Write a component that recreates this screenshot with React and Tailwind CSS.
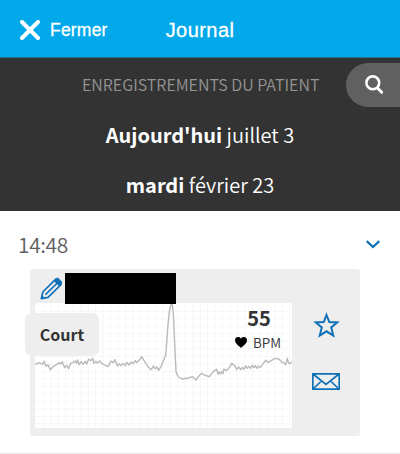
const SANS = "font-['Noto_Sans_CJK_SC',sans-serif]";

const TRACE =
  "0,185 12,179 23,184 27,175 33,190 39,185 46,200 53,192 65,184 73,179 77,183 82,176 89,194 95,187 101,197 107,181 115,178 121,174 124,181 128,171 132,185 139,176 144,184 151,175 155,183 161,169 168,173 173,166 177,181 183,175 187,180 194,174 200,181 207,185 219,191 228,174 235,179 240,170 247,189 253,182 258,188 264,181 271,188 276,178 282,186 289,177 294,182 301,173 305,179 313,171 320,161 327,173 337,188 347,200 351,197 355,189 361,197 366,192 371,202 378,191 385,173 392,157 395,120 399,65 403,26 407,8 409,5 412,5 415,31 419,121 423,206 426,214 431,222 441,228 460,225 473,221 483,231 490,221 500,211 508,216 523,221 535,205 545,199 549,213 553,207 556,213 560,206 564,212 567,198 575,203 585,191 590,181 600,189 605,199 611,192 617,200 622,193 627,199 632,188 637,196 642,190 647,196 652,187 657,194 661,188 666,196 670,189 676,193 692,172 700,178 720,166 732,168 740,177 746,179 752,185 757,166 761,181 765,182 771,176";

const GRID_X = Array.from({ length: 34 }, (_, i) => 25 + i * 22.4);
const GRID_Y = Array.from({ length: 16 }, (_, i) => 25 + i * 22.5);

function EcgChart() {
  return (
    <svg className="block h-[125px] w-[257px]" viewBox="0 0 771 375" fill="none">
      <g stroke="#f7f7f7" strokeWidth="3">
        {GRID_X.map((x) => (
          <path key={x} d={`M${x} 0V375`} />
        ))}
        {GRID_Y.map((y) => (
          <path key={y} d={`M0 ${y}H771`} />
        ))}
      </g>
      <polyline points={TRACE} stroke="#b9b9b9" strokeWidth="4.2" strokeLinejoin="round" />
    </svg>
  );
}

function Pencil() {
  return (
    <svg className="block h-[23px] w-[23px]" viewBox="0 0 23 23" fill="none" stroke="#0f70b7" strokeWidth="1.7" strokeLinejoin="round">
      <path d="M1.3 21.6 2.8 15 15.8 2.1 21.2 7.5 8 20.4Z" />
      <path d="M5.4 17.6 17 6.2" strokeWidth="1.6" />
      <path d="M13.8 4 17 .8Q17.6.3 18.3.9L22 4.8Q22.5 5.5 21.9 6.2L19 9.2Z" fill="#0f70b7" stroke="none" />
      <path d="M1 22 2 18 5 21.2Z" fill="#0f70b7" stroke="none" />
    </svg>
  );
}

export default function App() {
  return (
    <div className={`h-[454px] w-[400px] overflow-hidden bg-white ${SANS}`}>
      <header className="grid h-[57px] grid-cols-[141px_118px_141px] items-center bg-[#02a9ea] pt-[3px] font-['Liberation_Sans',Arial,sans-serif] text-white">
        <div className="flex items-center pl-5">
          <svg className="h-5 w-5" viewBox="0 0 20 20" stroke="#fff" strokeWidth="4" strokeLinecap="round">
            <path d="M2 2 18 18M18 2 2 18" />
          </svg>
          <span className="ml-[10px] text-[17.5px] leading-5 tracking-[0.2px] [-webkit-text-stroke:0.3px_white]">Fermer</span>
        </div>
        <h1 className="text-center text-[20px] leading-6 tracking-[0.45px] [-webkit-text-stroke:0.3px_white]">
          Journal
        </h1>
      </header>

      <section className="h-[154px] border-t border-[#277093] bg-[#333] text-white">
        <div className="flex h-[52px] items-center pt-[1px]">
          <h2 className="w-[263px] shrink-0 pb-[2px] pl-[82px] text-[16px] leading-6 font-[350] whitespace-nowrap text-[#959595]">
            ENREGISTREMENTS DU PATIENT
          </h2>
          <button className="ml-auto flex h-[44px] w-[54px] shrink-0 items-center rounded-l-[22px] bg-[#606060] pl-[19px]">
            <svg className="h-[19px] w-[18px]" viewBox="0 0 18 19" fill="none" stroke="#fff">
              <circle cx="7.8" cy="7.8" r="6.4" strokeWidth="2.6" />
              <path d="M12.5 13 16.7 17.3" strokeWidth="3" strokeLinecap="round" />
            </svg>
          </button>
        </div>
        <p className="h-[50px] text-center text-[20px] leading-[50px] font-[350]">
          <b className="font-bold">Aujourd'hui</b> juillet 3
        </p>
        <p className="h-[50px] text-center text-[20px] leading-[50px] font-[350]">
          <b className="font-bold">mardi</b> février 23
        </p>
      </section>

      <main className="h-[243px] border-b border-[#e8e8e8]">
        <div className="flex h-[58px] items-center justify-between pt-[8px] pr-[20px] pl-[18px]">
          <time className="text-[21px] leading-8 font-[350] tracking-[-0.4px] text-[#606060]">14:48</time>
          <svg className="h-[9px] w-[14px]" viewBox="0 0 14 9" fill="none" stroke="#0f70b7" strokeWidth="2.3">
            <path d="M.7 1.2 7 7 13.3 1.2" />
          </svg>
        </div>

        <article className="ml-[30px] flex h-[167px] w-[330px] rounded-[3px] bg-[#eee] pl-[5px]">
          <div className="w-[257px]">
            <div className="flex h-[34px] items-end">
              <div className="mb-[3px] ml-[5px]">
                <Pencil />
              </div>
              <div className="relative top-[1px] z-10 ml-[2px] h-[31px] w-[111px] bg-black" />
            </div>
            <div className="relative h-[125px] w-[257px] rounded-tl-[4px] bg-white">
              <EcgChart />
              <span className="absolute top-[10px] -left-[10px] flex h-[43px] w-[74px] items-center justify-center rounded-[7px] bg-[#eee] pb-[1px] text-[16px] font-bold text-[#333]">
                Court
              </span>
              <strong className="absolute top-[3px] right-[8px] w-[50px] text-center text-[20px] leading-6 text-[#333]">
                55
              </strong>
              <div className="absolute top-[29px] right-[11px] flex items-center text-[#333]">
                <svg className="mr-[6px] h-[11px] w-[12px]" viewBox="0 0 12 11" fill="#000">
                  <path d="M6 11C4.5 9.2 0 6.8 0 3.2 0 1.2 1.4 0 3.1 0 4.5 0 5.5.7 6 1.7 6.5.7 7.5 0 8.9 0 10.6 0 12 1.2 12 3.2 12 6.8 7.5 9.2 6 11Z" />
                </svg>
                <span className="text-[13.5px] leading-5 font-[350]">BPM</span>
              </div>
            </div>
          </div>
          <div className="flex w-[68px] flex-col items-center pt-[43px]">
            <svg className="h-[26px] w-[27px]" viewBox="0 0 27 26" fill="none" stroke="#0f70b7" strokeWidth="2">
              <path d="M13.5 3 16.3 10 24.2 10.4 18.2 15.4 20.3 23.6 13.5 19.3 6.7 23.6 8.8 15.4 2.8 10.4 10.7 10Z" />
            </svg>
            <svg className="mt-[35px] h-[17px] w-[28px]" viewBox="0 0 28 17" fill="none" stroke="#0f70b7" strokeWidth="1.7">
              <path d="M.8.9H27.2V16.1H.8ZM1 1 14 11.3 27 1M1 16 9.5 8M27 16 18.5 8" />
            </svg>
          </div>
        </article>
      </main>
    </div>
  );
}
